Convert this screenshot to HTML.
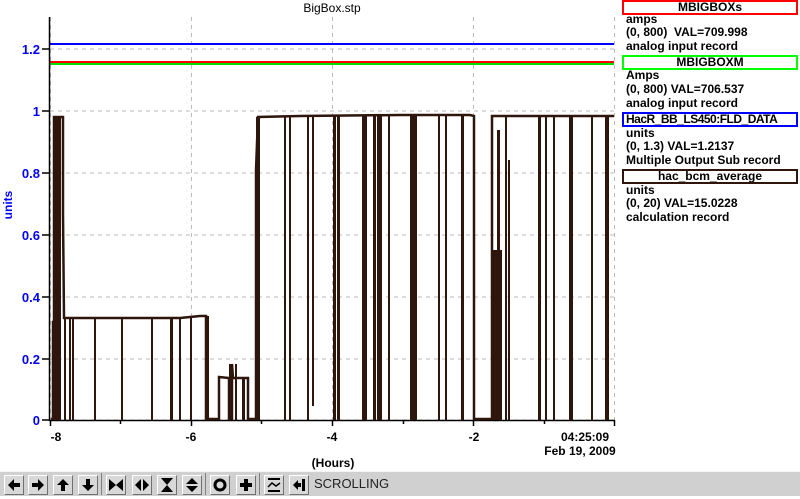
<!DOCTYPE html>
<html><head><meta charset="utf-8"><style>
body{margin:0;width:800px;height:495px;background:#fff;overflow:hidden;position:relative;font-family:"Liberation Sans",sans-serif;}
.t{position:absolute;font-size:12px;color:#000;white-space:nowrap;}
.box{position:absolute;left:622px;width:172px;height:11px;border:2px solid;font-size:12px;line-height:11px;text-align:center;font-weight:bold;overflow:hidden;white-space:nowrap;}
.tb{position:absolute;left:0;top:471px;width:800px;height:24px;background:#d0d0d0;border-top:1px solid #f4f4f4;}
.bt{position:absolute;top:3px;width:18px;height:18px;background:#d8d8d8;border:1px solid;border-color:#fff #707070 #707070 #fff;}
.sep{position:absolute;top:1px;width:1px;height:22px;background:#808080;}
</style></head><body>
<svg width="800" height="470" style="position:absolute;left:0;top:0" font-family="Liberation Sans, sans-serif">
<g stroke="#bbb" stroke-dasharray="4,4" stroke-width="1">
<line x1="50" y1="49" x2="614" y2="49"/><line x1="50" y1="111" x2="614" y2="111"/><line x1="50" y1="173" x2="614" y2="173"/><line x1="50" y1="235" x2="614" y2="235"/><line x1="50" y1="297" x2="614" y2="297"/><line x1="50" y1="359" x2="614" y2="359"/><line x1="50" y1="420" x2="614" y2="420"/>
<line x1="50.5" y1="17" x2="50.5" y2="420"/><line x1="191.5" y1="17" x2="191.5" y2="420"/><line x1="332.5" y1="17" x2="332.5" y2="420"/><line x1="473.5" y1="17" x2="473.5" y2="420"/><line x1="614.5" y1="17" x2="614.5" y2="420"/>
</g>
<line x1="50" y1="44" x2="614" y2="44" stroke="#0000ff" stroke-width="2"/>
<line x1="50" y1="62" x2="614" y2="62" stroke="#ff0000" stroke-width="2"/>
<line x1="50" y1="64" x2="614" y2="64" stroke="#00dd00" stroke-width="2"/>
<g stroke="#000" stroke-width="1.5">
<line x1="49.5" y1="17" x2="49.5" y2="421"/><line x1="49" y1="420.5" x2="615" y2="420.5"/>
<line x1="42" y1="49" x2="50" y2="49"/><line x1="42" y1="111" x2="50" y2="111"/><line x1="42" y1="173" x2="50" y2="173"/><line x1="42" y1="235" x2="50" y2="235"/><line x1="42" y1="297" x2="50" y2="297"/><line x1="42" y1="359" x2="50" y2="359"/><line x1="42" y1="420" x2="50" y2="420"/>
<line x1="50.5" y1="420" x2="50.5" y2="426"/><line x1="120.5" y1="420" x2="120.5" y2="424"/><line x1="191.5" y1="420" x2="191.5" y2="426"/><line x1="261.5" y1="420" x2="261.5" y2="424"/><line x1="332.5" y1="420" x2="332.5" y2="426"/><line x1="403.5" y1="420" x2="403.5" y2="424"/><line x1="473.5" y1="420" x2="473.5" y2="426"/><line x1="544.5" y1="420" x2="544.5" y2="424"/><line x1="614.5" y1="420" x2="614.5" y2="426"/>
</g>
<g fill="#0000ff" font-size="13" font-weight="bold" text-anchor="end">
<text x="40" y="54">1.2</text><text x="40" y="116">1</text><text x="40" y="178">0.8</text><text x="40" y="240">0.6</text><text x="40" y="302">0.4</text><text x="40" y="364">0.2</text><text x="40" y="425">0</text>
<text transform="translate(12,205) rotate(-90)" text-anchor="middle" font-size="12">units</text>
</g>
<g font-size="12" font-weight="bold" text-anchor="middle">
<text x="56" y="441">-8</text><text x="191" y="441">-6</text><text x="332" y="441">-4</text><text x="474" y="441">-2</text>
<text x="585" y="441">04:25:09</text><text x="580" y="455">Feb 19, 2009</text>
<text x="333" y="467">(Hours)</text>
</g>
<text x="332" y="12" font-size="12" text-anchor="middle">BigBox.stp</text>
<g fill="none" stroke="#2e160c" stroke-width="2.5">
<polyline points="51,419 53,419 53,322 54,322 54,117 57,117 57,419 59,419 59,117 63,117 63,215 64,318 90,318 110,318 150,318 180,318 200,316 206,316 206,419 219,419 219,377 229,378 229,419 232,419 232,364 233,378 248,378 248,419 256,419 256,170 258,117 300,116 400,115 470,115 474,116 474,419 492,419 492,116 520,116 614,116"/>
</g>
<g fill="#2e160c">
<rect x="53" y="117" width="8" height="303"/>
<rect x="64" y="318" width="2" height="102"/><rect x="69" y="318" width="2" height="102"/><rect x="72" y="318" width="2" height="102"/><rect x="94" y="318" width="2" height="102"/><rect x="121" y="318" width="2" height="102"/><rect x="151" y="318" width="2" height="102"/><rect x="170" y="318" width="3" height="102"/><rect x="179" y="318" width="2" height="102"/><rect x="190" y="318" width="2" height="102"/>
<rect x="206" y="316" width="3" height="104"/><rect x="229" y="364" width="2" height="56"/><rect x="235" y="364" width="2" height="56"/><rect x="242" y="378" width="3" height="42"/><rect x="247" y="378" width="2" height="42"/>
<rect x="256" y="117" width="4" height="303"/>
<rect x="284" y="116" width="2" height="304"/><rect x="289" y="116" width="2" height="304"/><rect x="307" y="116" width="2" height="304"/><rect x="312" y="116" width="2" height="290"/><rect x="333" y="116" width="3" height="304"/><rect x="337" y="116" width="3" height="304"/>
<rect x="362" y="116" width="5" height="304"/><rect x="373" y="116" width="3" height="304"/><rect x="377" y="116" width="5" height="304"/><rect x="388" y="116" width="2" height="304"/><rect x="410" y="116" width="7" height="304"/><rect x="438" y="116" width="2" height="304"/><rect x="445" y="116" width="2" height="304"/><rect x="461" y="116" width="3" height="304"/>
<rect x="493" y="250" width="9" height="170"/><rect x="497" y="130" width="3" height="290"/><rect x="505" y="116" width="2" height="304"/><rect x="508" y="160" width="2" height="260"/><rect x="538" y="116" width="3" height="304"/><rect x="545" y="116" width="2" height="304"/><rect x="553" y="116" width="2" height="304"/><rect x="569" y="116" width="4" height="304"/><rect x="591" y="116" width="2" height="304"/><rect x="605" y="116" width="4" height="304"/>
</g>
</svg>
<div class="box" style="top:0;border-color:#f00">MBIGBOXs</div>
<div class="t" style="left:626px;top:12px;font-weight:bold">amps</div>
<div class="t" style="left:626px;top:25px;font-weight:bold">(0, 800)&nbsp; VAL=709.998</div>
<div class="t" style="left:626px;top:39px;font-weight:bold">analog input record</div>
<div class="box" style="top:55px;border-color:#0f0">MBIGBOXM</div>
<div class="t" style="left:626px;top:68px;font-weight:bold">Amps</div>
<div class="t" style="left:626px;top:82px;font-weight:bold">(0, 800) VAL=706.537</div>
<div class="t" style="left:626px;top:96px;font-weight:bold">analog input record</div>
<div class="box" style="top:112px;border-color:#00f;text-align:left;padding-left:2px;width:170px;letter-spacing:-0.5px">HacR_BB_LS450:FLD_DATA</div>
<div class="t" style="left:626px;top:126px;font-weight:bold">units</div>
<div class="t" style="left:626px;top:139px;font-weight:bold">(0, 1.3) VAL=1.2137</div>
<div class="t" style="left:626px;top:153px;font-weight:bold">Multiple Output Sub record</div>
<div class="box" style="top:169px;border-color:#2e160c">hac_bcm_average</div>
<div class="t" style="left:626px;top:183px;font-weight:bold">units</div>
<div class="t" style="left:626px;top:196px;font-weight:bold">(0, 20) VAL=15.0228</div>
<div class="t" style="left:626px;top:210px;font-weight:bold">calculation record</div>
<div class="tb">
<div class="bt" style="left:4px"><svg width="18" height="18"><path d="M3 9L9 3V7H15V11H9V15Z"/></svg></div>
<div class="bt" style="left:28px"><svg width="18" height="18"><path d="M15 9L9 3V7H3V11H9V15Z"/></svg></div>
<div class="bt" style="left:53px"><svg width="18" height="18"><path d="M9 3L3 9H7V15H11V9H15Z"/></svg></div>
<div class="bt" style="left:78px"><svg width="18" height="18"><path d="M9 15L3 9H7V3H11V9H15Z"/></svg></div>
<div class="sep" style="left:101px"></div>
<div class="bt" style="left:106px"><svg width="18" height="18"><path d="M2 3L9 9L2 15ZM16 3L9 9L16 15Z"/></svg></div>
<div class="bt" style="left:132px"><svg width="18" height="18"><path d="M8 3L2 9L8 15ZM10 3L16 9L10 15Z"/></svg></div>
<div class="bt" style="left:157px"><svg width="18" height="18"><path d="M3 2L9 9L15 2ZM3 16L9 9L15 16Z"/></svg></div>
<div class="bt" style="left:182px"><svg width="18" height="18"><path d="M3 8L9 2L15 8ZM3 10L9 16L15 10Z"/></svg></div>
<div class="sep" style="left:205px"></div>
<div class="bt" style="left:210px"><svg width="18" height="18"><circle cx="9" cy="9" r="5" fill="none" stroke="#000" stroke-width="3"/></svg></div>
<div class="bt" style="left:236px"><svg width="18" height="18"><path d="M7 3H11V7H15V11H11V15H7V11H3V7H7Z"/></svg></div>
<div class="sep" style="left:259px"></div>
<div class="bt" style="left:264px"><svg width="18" height="18"><path d="M3 3H15M3 15H15" stroke="#000" stroke-width="2"/><path d="M3 11L7 7L11 10L15 7" stroke="#000" fill="none" stroke-width="1.5"/></svg></div>
<div class="bt" style="left:289px"><svg width="18" height="18"><path d="M3 9L8 4V7H11V11H8V14Z M12 3H15V15H12Z"/></svg></div>
<div class="t" style="left:314px;top:4px;font-size:13px;color:#222">SCROLLING</div>
</div>
</body></html>
